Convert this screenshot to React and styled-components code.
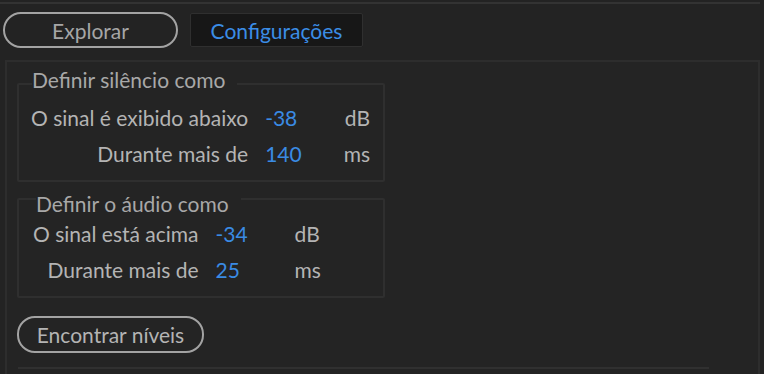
import React from 'react'
import styled, {createGlobalStyle} from 'styled-components'

const Global = createGlobalStyle`
  html, body {
    margin: 0;
    padding: 0;
    background: #232323;
  }
  body {
    width: 764px;
    height: 374px;
    overflow: hidden;
    font-family: Lato, "Open Sans", sans-serif;
  }
`

const Screen = styled.div`
  width: 764px;
  height: 374px;
  box-sizing: border-box;
  padding-top: 2px;
  background: #232323;
`

const TopRule = styled.div`
  width: 760px;
  height: 2px;
  background: #333;
`

const TabBar = styled.div`
  display: flex;
  gap: 12px;
  padding: 8px 0 0 3px;
  height: 56px;
  box-sizing: border-box;
`

const Tab = styled.button`
  font-family: inherit;
  font-size: 21px;
  height: 36px;
  box-sizing: border-box;
  padding: 0;
  cursor: pointer;
  ${p => p.$active ? `
    width: 173px;
    margin-top: 1px;
    height: 34px;
    background: #171717;
    color: #3b8de6;
    border: 1px solid #2f2f2f;
    border-radius: 2px;
  ` : `
    width: 175px;
    background: transparent;
    color: #a6a6a6;
    border: 2px solid #a3a3a3;
    border-radius: 18px;
  `}
`

const Panel = styled.div`
  margin: 0 4px 0 5px;
  border: 2px solid #2d2d2d;
  border-bottom: none;
  background: #242424;
  height: 320px;
  box-sizing: border-box;
  padding: 6px 0 0 10px;
  display: flex;
  flex-direction: column;
  align-items: flex-start;
`

const Group = styled.fieldset`
  width: 368px;
  box-sizing: border-box;
  margin: 0;
  padding: 0 13px 8px ${p => p.$padLeft}px;
  border: 2px solid #2f2f2f;
  border-radius: 2px;
  display: grid;
  grid-template-columns: ${p => p.$cols};
  align-items: center;
`

const Legend = styled.legend`
  color: #a8a8a8;
  font-size: 21px;
  line-height: 24px;
  padding: ${p => p.$lift}px 12px ${p => p.$drop}px 0;
  margin-left: ${p => p.$offset}px;
`

const Label = styled.span`
  color: #b4b4b4;
  font-size: 21px;
  line-height: 36px;
  text-align: right;
  white-space: nowrap;
`

const Value = styled.span`
  color: #3a8be4;
  font-size: 21px;
  line-height: 36px;
  padding-left: 17px;
`

const Unit = styled.span`
  color: #b4b4b4;
  font-size: 21px;
  line-height: 36px;
  text-align: ${p => p.$align};
`

const PillButton = styled.button`
  font-family: inherit;
  font-size: 21px;
  color: #b4b4b4;
  background: transparent;
  border: 2px solid #a3a3a3;
  border-radius: 18px;
  width: 187px;
  height: 37px;
  padding: 0;
  margin-top: 18px;
`

const Divider = styled.div`
  width: 691px;
  height: 2px;
  background: #303030;
  margin-top: 14px;
  margin-left: 1px;
`

const rowsA = [
  ['O sinal é exibido abaixo', '-38', 'dB'],
  ['Durante mais de', '140', 'ms'],
]
const rowsB = [
  ['O sinal está acima', '-34', 'dB'],
  ['Durante mais de', '25', 'ms'],
]

export default function App() {
  return (
    <>
      <Global />
      <Screen>
        <TopRule />
        <TabBar>
          <Tab>Explorar</Tab>
          <Tab $active>Configurações</Tab>
        </TabBar>
        <Panel>
          <Group $cols="auto 79px 1fr" $padLeft={12}>
            <Legend $offset={1} $lift={0} $drop={8}>Definir silêncio como</Legend>
            {rowsA.map(r => (
              <React.Fragment key={r[0]}>
                <Label>{r[0]}</Label>
                <Value>{r[1]}</Value>
                <Unit $align="right">{r[2]}</Unit>
              </React.Fragment>
            ))}
          </Group>
          <Group $cols="auto 96px 1fr" $padLeft={14}>
            <Legend $offset={3} $lift={10} $drop={0}>Definir o áudio como</Legend>
            {rowsB.map(r => (
              <React.Fragment key={r[0]}>
                <Label>{r[0]}</Label>
                <Value>{r[1]}</Value>
                <Unit $align="left">{r[2]}</Unit>
              </React.Fragment>
            ))}
          </Group>
          <PillButton>Encontrar níveis</PillButton>
          <Divider />
        </Panel>
      </Screen>
    </>
  )
}
